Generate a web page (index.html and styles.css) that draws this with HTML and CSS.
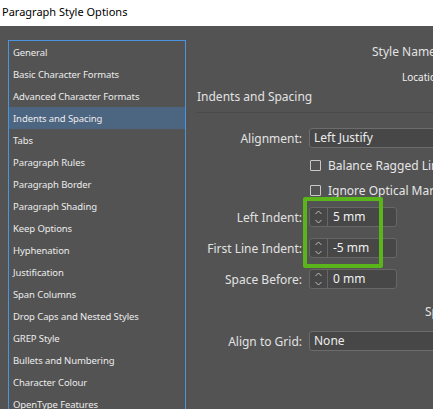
FILE: index.html
```html
<!DOCTYPE html>
<html>
<head>
<meta charset="utf-8">
<link rel="stylesheet" href="styles.css">
</head>
<body>
<div class="titlebar">Paragraph Style Options</div>
<div class="main">
  <ul class="cats">
    <li>General</li>
    <li>Basic Character Formats</li>
    <li>Advanced Character Formats</li>
    <li class="sel">Indents and Spacing</li>
    <li>Tabs</li>
    <li>Paragraph Rules</li>
    <li>Paragraph Border</li>
    <li>Paragraph Shading</li>
    <li>Keep Options</li>
    <li>Hyphenation</li>
    <li>Justification</li>
    <li>Span Columns</li>
    <li>Drop Caps and Nested Styles</li>
    <li>GREP Style</li>
    <li>Bullets and Numbering</li>
    <li>Character Colour</li>
    <li>OpenType Features</li>
  </ul>
  <div class="panel">
    <div class="name-row">Style Name:</div>
    <div class="loc-row">Location:</div>
    <div class="heading">Indents and Spacing</div>
    <div class="divider"></div>
    <div class="form">
      <div class="row r-align">
        <span class="lbl">Alignment:</span>
        <div class="select">Left Justify</div>
      </div>
      <div class="row r-cb1">
        <span class="lbl"></span>
        <label class="cb"><span class="box"></span>Balance Ragged Lines</label>
      </div>
      <div class="row r-cb2">
        <span class="lbl"></span>
        <label class="cb"><span class="box"></span>Ignore Optical Margin</label>
      </div>
      <div class="row r-li">
        <span class="lbl">Left Indent:</span>
        <div class="spin"><span class="arrows"><svg width="9" height="16" viewBox="0 0 9 16"><path d="M1.5 5 L4.5 2 L7.5 5 M1.5 11 L4.5 14 L7.5 11" fill="none" stroke="#bdbdbd" stroke-width="1"/></svg></span><span class="val">5 mm</span></div>
      </div>
      <div class="row r-fli">
        <span class="lbl">First Line Indent:</span>
        <div class="spin"><span class="arrows"><svg width="9" height="16" viewBox="0 0 9 16"><path d="M1.5 5 L4.5 2 L7.5 5 M1.5 11 L4.5 14 L7.5 11" fill="none" stroke="#bdbdbd" stroke-width="1"/></svg></span><span class="val">-5 mm</span></div>
      </div>
      <div class="row r-sb">
        <span class="lbl">Space Before:</span>
        <div class="spin"><span class="arrows"><svg width="9" height="16" viewBox="0 0 9 16"><path d="M1.5 5 L4.5 2 L7.5 5 M1.5 11 L4.5 14 L7.5 11" fill="none" stroke="#bdbdbd" stroke-width="1"/></svg></span><span class="val">0 mm</span></div>
      </div>
      <div class="row r-sa">
        <span class="lbl"></span>
        <span class="sa">Space After:</span>
      </div>
      <div class="row r-grid">
        <span class="lbl">Align to Grid:</span>
        <div class="select">None</div>
      </div>
    </div>
    <div class="highlight"></div>
  </div>
</div>
</body>
</html>
```

FILE: styles.css
```css
html, body {
  margin: 0;
  padding: 0;
  width: 433px;
  height: 409px;
  overflow: hidden;
  background: #535353;
  font-family: "Noto Sans", "Open Sans", sans-serif;
}
.titlebar {
  height: 26px;
  background: #ffffff;
  color: #000000;
  font-size: 11px;
  line-height: 23px;
  padding-left: 2px;
  box-sizing: border-box;
}
.main {
  display: flex;
  height: 383px;
  overflow: hidden;
}
.cats {
  list-style: none;
  margin: 14px 0 0 8px;
  padding: 0;
  width: 176px;
  flex: none;
  border: 1px solid #4a95e0;
  border-bottom: none;
  height: 400px;
}
.cats li {
  height: 22px;
  line-height: 24px;
  padding-left: 4px;
  font-size: 9.5px;
  letter-spacing: -0.1px;
  color: #ececec;
  white-space: nowrap;
}
.cats li.sel {
  background: #4c6581;
}
.panel {
  flex: 1;
  position: relative;
  padding: 18px 0 0 11px;
  overflow: hidden;
  color: #e2e2e2;
  font-size: 12px;
}
.name-row {
  height: 16px;
  line-height: 16px;
  padding-left: 175px;
  white-space: nowrap;
}
.loc-row {
  margin-top: 10px;
  height: 14px;
  line-height: 14px;
  padding-left: 205px;
  font-size: 10px;
  color: #f0f0f0;
  white-space: nowrap;
}
.heading {
  margin-top: 5px;
  height: 16px;
  line-height: 16px;
  white-space: nowrap;
}
.divider {
  margin-top: 7px;
  height: 1px;
  background: #4a4a4a;
  margin-left: -1px;
  width: 400px;
}
.form {
  margin-top: 15px;
  display: flex;
  flex-direction: column;
}
.row {
  display: grid;
  grid-template-columns: 105px 1fr;
  column-gap: 7px;
  align-items: center;
  white-space: nowrap;
}
.lbl {
  text-align: right;
}
.r-align { height: 20px; }
.r-cb1 { height: 16px; margin-top: 9px; }
.r-cb2 { height: 16px; margin-top: 9px; }
.r-li { height: 20px; margin-top: 9px; }
.r-fli { height: 20px; margin-top: 11px; }
.r-sb { height: 20px; margin-top: 11px; }
.r-sa { height: 16px; margin-top: 14px; }
.r-grid { height: 20px; margin-top: 12px; }
.select {
  height: 20px;
  box-sizing: border-box;
  border: 1px solid #6c6c6c;
  border-radius: 3px;
  background: #474747;
  line-height: 18px;
  padding-left: 4px;
  width: 200px;
  color: #ececec;
}
.cb {
  display: flex;
  align-items: center;
  color: #e6e6e6;
}
.box {
  width: 11px;
  height: 11px;
  box-sizing: border-box;
  border: 1px solid #c8c8c8;
  border-radius: 1px;
  margin-left: 1px;
  margin-right: 7px;
  flex: none;
}
.spin {
  width: 88px;
  height: 20px;
  box-sizing: border-box;
  border: 1px solid #666666;
  border-radius: 3px;
  background: #474747;
  display: flex;
}
.arrows {
  width: 17px;
  border-right: 1px solid #666666;
  display: flex;
  align-items: center;
  justify-content: center;
}
.val {
  padding-left: 5px;
  line-height: 18px;
  color: #f0f0f0;
}
.sa {
  padding-left: 116px;
}
.highlight {
  position: absolute;
  left: 117px;
  top: 171px;
  width: 80px;
  height: 71px;
  box-sizing: border-box;
  border: 4px solid #59b51a;
  border-radius: 2px;
}
```
